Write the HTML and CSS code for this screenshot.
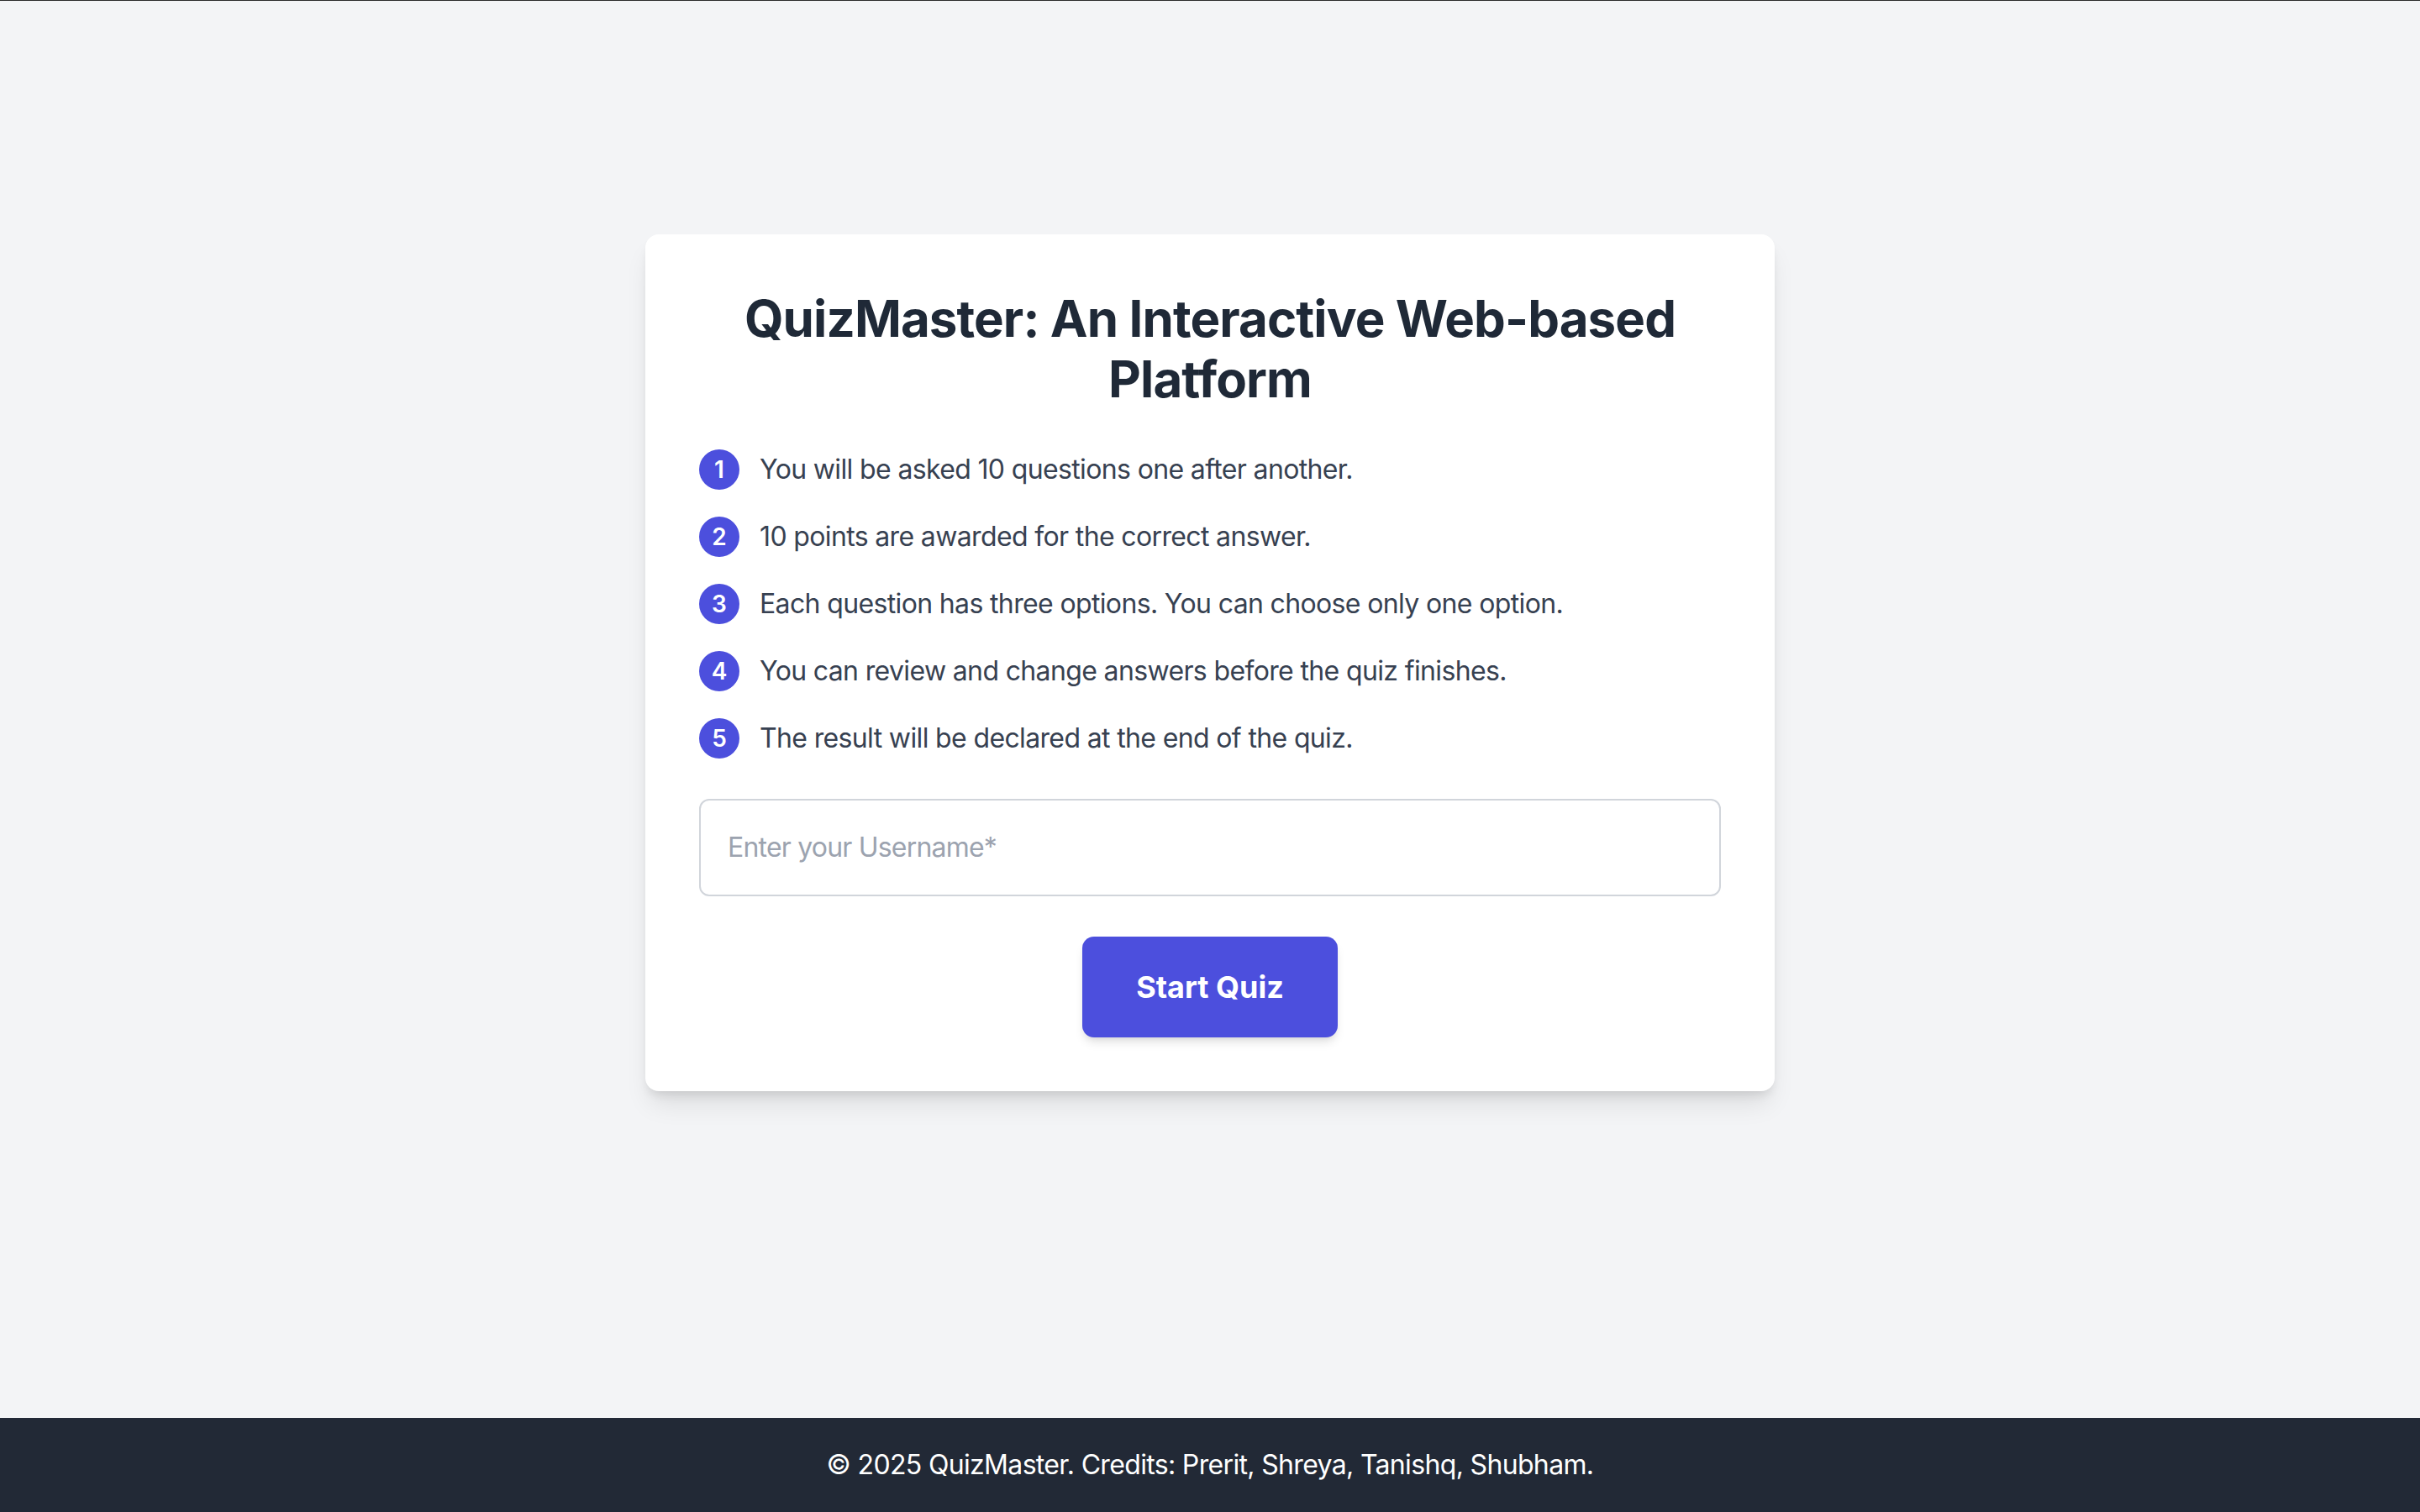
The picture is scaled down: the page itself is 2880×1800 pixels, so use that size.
FILE: index.html
```html
<!DOCTYPE html>
<html lang="en">
<head>
<meta charset="utf-8">
<title>QuizMaster</title>
<link rel="stylesheet" href="styles.css">
</head>
<body>
<main class="main">
  <section class="card">
    <h1 class="title">QuizMaster: An Interactive Web-based Platform</h1>
    <ul class="rules">
      <li class="rule"><span class="num">1</span><span>You will be asked 10 questions one after another.</span></li>
      <li class="rule"><span class="num">2</span><span>10 points are awarded for the correct answer.</span></li>
      <li class="rule"><span class="num">3</span><span>Each question has three options. You can choose only one option.</span></li>
      <li class="rule"><span class="num">4</span><span>You can review and change answers before the quiz finishes.</span></li>
      <li class="rule"><span class="num">5</span><span>The result will be declared at the end of the quiz.</span></li>
    </ul>
    <input class="username" type="text" placeholder="Enter your Username*">
    <button class="start" type="button">Start Quiz</button>
  </section>
</main>
<footer class="footer">© 2025 QuizMaster. Credits: Prerit, Shreya, Tanishq, Shubham.</footer>
</body>
</html>
```

FILE: styles.css
```css
html, body {
  margin: 0;
  padding: 0;
}
body {
  min-height: 100vh;
  display: flex;
  flex-direction: column;
  background: #f3f4f6;
  font-family: Inter, "Noto Sans", sans-serif;
  box-sizing: border-box;
  border-top: 1px solid #2b2b2b;
}
.main {
  flex: 1;
  display: flex;
  align-items: center;
  justify-content: center;
  padding-bottom: 111px;
}
.card {
  width: 1344px;
  box-sizing: border-box;
  padding: 64px;
  background: #ffffff;
  border-radius: 16px;
  box-shadow: 0 20px 30px -6px rgba(0, 0, 0, 0.1), 0 8px 12px -4px rgba(0, 0, 0, 0.1);
}
.title {
  margin: 0 0 48px;
  font-size: 60px;
  line-height: 72px;
  font-weight: 700;
  letter-spacing: -0.9px;
  color: #1f2937;
  text-align: center;
}
.rules {
  list-style: none;
  margin: 0 0 48px;
  padding: 0;
  display: flex;
  flex-direction: column;
  gap: 32px;
}
.rule {
  display: flex;
  align-items: flex-start;
  font-size: 32px;
  line-height: 48px;
  letter-spacing: -0.64px;
  color: #374151;
}
.num {
  flex: none;
  width: 48px;
  height: 48px;
  margin-right: 24px;
  border-radius: 50%;
  background: #4c4fdd;
  color: #ffffff;
  font-size: 28px;
  font-weight: 600;
  letter-spacing: 0;
  display: flex;
  align-items: center;
  justify-content: center;
}
.username {
  display: block;
  width: 100%;
  box-sizing: border-box;
  margin: 0 0 48px;
  padding: 32px;
  border: 2px solid #d1d5db;
  border-radius: 12px;
  font-family: Inter, "Noto Sans", sans-serif;
  font-size: 32px;
  line-height: 48px;
  letter-spacing: -0.8px;
  color: #111827;
  background: #ffffff;
  outline: none;
}
.username::placeholder {
  color: #9ca3af;
}
.start {
  display: block;
  margin: 0 auto;
  padding: 32px 64px;
  border: none;
  border-radius: 14px;
  background: #4c4fdd;
  color: #ffffff;
  font-family: Inter, "Noto Sans", sans-serif;
  font-size: 36px;
  line-height: 56px;
  font-weight: 700;
  box-shadow: 0 8px 12px -2px rgba(0, 0, 0, 0.1), 0 4px 8px -4px rgba(0, 0, 0, 0.1);
}
.footer {
  background: #222936;
  color: #ffffff;
  text-align: center;
  padding: 32px;
  font-size: 32px;
  line-height: 48px;
  letter-spacing: -0.66px;
}
```
